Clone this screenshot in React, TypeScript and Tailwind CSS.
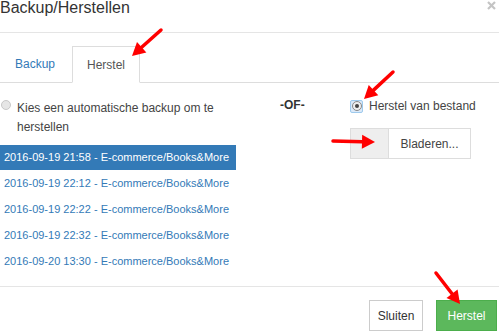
import React from 'react';

const backups = [
  '2016-09-19 21:58 - E-commerce/Books&More',
  '2016-09-19 22:12 - E-commerce/Books&More',
  '2016-09-19 22:22 - E-commerce/Books&More',
  '2016-09-19 22:32 - E-commerce/Books&More',
  '2016-09-20 13:30 - E-commerce/Books&More',
];

// red annotation arrow, tip at (x2, y2)
const Arrow = ({ x1, y1, x2, y2 }: { x1: number; y1: number; x2: number; y2: number }) => {
  const a = Math.atan2(y2 - y1, x2 - x1);
  const len = 13;
  const w = 7;
  const bx = x2 - Math.cos(a) * len;
  const by = y2 - Math.sin(a) * len;
  const px = -Math.sin(a) * w;
  const py = Math.cos(a) * w;
  return (
    <g>
      <line x1={x1} y1={y1} x2={bx} y2={by} stroke="#f00" strokeWidth={3.5} strokeLinecap="round" />
      <polygon points={`${x2},${y2} ${bx + px},${by + py} ${bx - px},${by - py}`} fill="#f00" />
    </g>
  );
};

export default function App() {
  return (
    <div className="relative w-[499px] h-[335px] overflow-hidden bg-white font-['Liberation_Sans',Arial,sans-serif] text-[12px] text-[#333]">
      {/* header */}
      <div className="flex h-[33px] items-start justify-between border-b border-[#e5e5e5]">
        <h4 className="text-[16px] leading-[16px] text-[#333]">Backup/Herstellen</h4>
        <button aria-label="Sluiten" className="mr-[3px] mt-[1px]">
          <svg width="9" height="9" viewBox="0 0 9 9">
            <path d="M1 1 L8 8 M8 1 L1 8" stroke="#c4c4c4" strokeWidth="2.2" />
          </svg>
        </button>
      </div>

      {/* tabs */}
      <div className="mt-[13px] flex h-[37px] border-b border-[#ddd]">
        <div className="flex w-[72px] items-center pl-[15px] text-[#337ab7]">Backup</div>
        <div className="-mb-px flex w-[68px] items-center justify-center border border-b-white border-[#ddd] bg-white text-[#555]">
          Herstel
        </div>
      </div>

      {/* body */}
      <div className="mt-[16px] flex">
        <div className="w-[236px]">
          <div className="flex items-start gap-[6px] pl-[1px]">
            <span className="mt-[1px] h-[10px] w-[10px] shrink-0 rounded-full border border-[#c8c8c8] bg-[#e6e6e6]" />
            <span className="leading-[19px] text-[#444]">Kies een automatische backup om te herstellen</span>
          </div>
          <div className="mt-[8px] flex flex-col text-[11px]">
            {backups.map((b, i) => (
              <div
                key={b}
                className={
                  i === 0
                    ? 'flex h-[25px] items-center bg-[#337ab7] pl-[4px] text-white'
                    : 'flex h-[26px] items-center pl-[4px] text-[#337ab7]'
                }
              >
                {b}
              </div>
            ))}
          </div>
        </div>
        <div className="ml-[44px] w-[70px] font-bold leading-[16px] -mt-[2px]">-OF-</div>
        <div className="flex flex-col">
          <div className="-mt-[1px] flex items-center gap-[6px]">
            <span className="flex h-[13px] w-[13px] items-center justify-center rounded-[2px] border border-[#9ecaed] bg-[#dbe9f8]">
              <span className="flex h-[10px] w-[10px] items-center justify-center rounded-full border border-[#888] bg-[#eee]">
                <span className="h-[4px] w-[4px] rounded-full bg-[#444]" />
              </span>
            </span>
            <span className="leading-[16px] text-[#444]">Herstel van bestand</span>
          </div>
          <div className="mt-[14px] flex h-[31px] w-[121px] border border-[#ddd]">
            <div className="w-[37px] bg-[#eee]" />
            <div className="flex flex-1 items-center justify-center border-l border-[#ddd] bg-white text-[#444]">Bladeren...</div>
          </div>
        </div>
      </div>

      {/* footer */}
      <div className="absolute bottom-0 left-0 right-0 flex h-[49px] items-start justify-end gap-[13px] border-t border-[#e5e5e5] pr-[2px] pt-[13px]">
        <button className="h-[31px] w-[54px] border border-[#ccc] bg-white text-[#333]">Sluiten</button>
        <button className="h-[31px] w-[61px] border border-[#4cae4c] bg-[#5cb85c] text-white">Herstel</button>
      </div>

      {/* annotations */}
      <svg className="pointer-events-none absolute left-0 top-0" width={499} height={335}>
        <Arrow x1={161} y1={30} x2={132} y2={56} />
        <Arrow x1={393} y1={72} x2={364} y2={99} />
        <Arrow x1={333} y1={141} x2={375} y2={142} />
        <Arrow x1={436} y1={273} x2={460} y2={304} />
      </svg>
    </div>
  );
}
